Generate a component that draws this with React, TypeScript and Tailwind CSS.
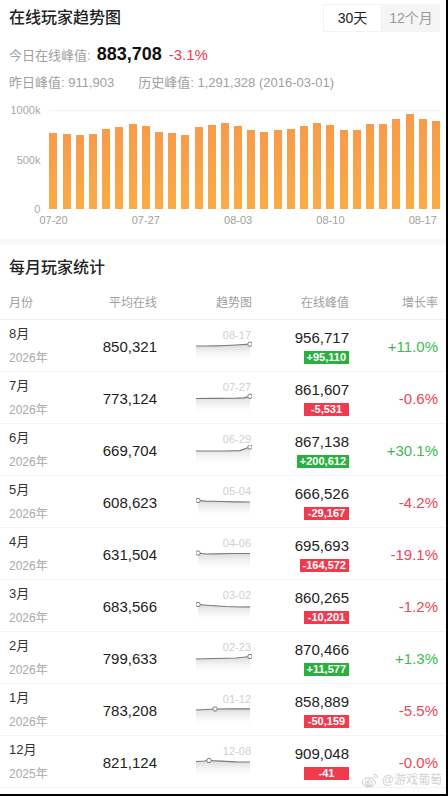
import React from "react";

const bars = [
  771, 754, 747, 761, 805, 825, 859, 835, 781, 765, 747, 831, 845, 869, 835,
  798, 775, 798, 805, 842, 869, 845, 801, 798, 859, 859, 909, 956, 909, 886,
];

const xLabels: Record<number, string> = {
  0: "07-20",
  7: "07-27",
  14: "08-03",
  21: "08-10",
  28: "08-17",
};

type Row = {
  month: string;
  year: string;
  avg: string;
  peak: string;
  diff: string;
  rate: string;
  up: boolean;
  date: string;
  pts: [number, number][];
  mark: number;
};

const rows: Row[] = [
  { month: "8月", year: "2026年", avg: "850,321", peak: "956,717", diff: "+95,110", rate: "+11.0%", up: true, date: "08-17", pts: [[0, 5], [10, 5], [20, 4.8], [30, 4.5], [40, 4], [54, 3.2]], mark: 5 },
  { month: "7月", year: "2026年", avg: "773,124", peak: "861,607", diff: "-5,531", rate: "-0.6%", up: false, date: "07-27", pts: [[0, 5.5], [20, 5.4], [40, 5.2], [48, 4.8], [54, 3.3]], mark: 4 },
  { month: "6月", year: "2026年", avg: "669,704", peak: "867,138", diff: "+200,612", rate: "+30.1%", up: true, date: "06-29", pts: [[0, 6], [15, 6], [30, 6], [44, 5.6], [54, 2]], mark: 4 },
  { month: "5月", year: "2026年", avg: "608,623", peak: "666,526", diff: "-29,167", rate: "-4.2%", up: false, date: "05-04", pts: [[2, 3.5], [10, 4.2], [25, 4.5], [40, 4.8], [54, 5]], mark: 0 },
  { month: "4月", year: "2026年", avg: "631,504", peak: "695,693", diff: "-164,572", rate: "-19.1%", up: false, date: "04-06", pts: [[2, 4], [10, 5], [20, 4.8], [35, 4.5], [54, 4.5]], mark: 0 },
  { month: "3月", year: "2026年", avg: "683,566", peak: "860,265", diff: "-10,201", rate: "-1.2%", up: false, date: "03-02", pts: [[2, 3.5], [15, 4.5], [30, 5.5], [45, 6], [54, 5.8]], mark: 0 },
  { month: "2月", year: "2026年", avg: "799,633", peak: "870,466", diff: "+11,577", rate: "+1.3%", up: true, date: "02-23", pts: [[0, 6], [20, 5.5], [40, 5], [54, 3.5]], mark: 3 },
  { month: "1月", year: "2026年", avg: "783,208", peak: "858,889", diff: "-50,159", rate: "-5.5%", up: false, date: "01-12", pts: [[0, 5], [10, 4.5], [19, 4], [35, 3.8], [54, 3.8]], mark: 2 },
  { month: "12月", year: "2025年", avg: "821,124", peak: "909,048", diff: "-41", rate: "-0.0%", up: false, date: "12-08", pts: [[0, 4.5], [8, 4], [13, 3.5], [25, 4.2], [40, 4.8], [54, 5]], mark: 2 },
];

function Spark({ row, id }: { row: Row; id: number }) {
  const line = row.pts.map((p, i) => `${i ? "L" : "M"}${p[0]} ${p[1]}`).join(" ");
  const first = row.pts[0];
  const last = row.pts[row.pts.length - 1];
  const area = `${line} L${last[0]} 22 L${first[0]} 22 Z`;
  const m = row.pts[row.mark];
  return (
    <svg width="56" height="22" viewBox="0 0 56 22">
      <defs>
        <linearGradient id={`g${id}`} x1="0" y1="0" x2="0" y2="1">
          <stop offset="0" stopColor="#d4d4d4" stopOpacity="0.9" />
          <stop offset="1" stopColor="#ffffff" stopOpacity="0" />
        </linearGradient>
      </defs>
      <path d={area} fill={`url(#g${id})`} />
      <path d={line} fill="none" stroke="#7a7a7a" strokeWidth="1.2" />
      <circle cx={m[0]} cy={m[1]} r="2.2" fill="#fff" stroke="#7a7a7a" strokeWidth="1" />
    </svg>
  );
}

export default function App() {
  return (
    <div className="relative h-[796px] w-[448px] overflow-hidden border-r-2 border-b-2 border-black bg-white font-['Liberation_Sans','Noto_Sans_CJK_SC',sans-serif] text-[#222]">
      {/* 30 day trend */}
      <div className="pl-[9px] pr-[6px]">
        <div className="mt-[4px] flex h-[28px] items-center justify-between">
          <div className="text-[16px] font-medium leading-[22px]">在线玩家趋势图</div>
          <div className="flex h-[28px] text-[14px]">
            <div className="flex w-[59px] items-center justify-center border border-[#f2f2f2] bg-white text-[#222]">30天</div>
            <div className="flex w-[58px] items-center justify-center bg-[#f5f5f5] text-[#999]">12个月</div>
          </div>
        </div>
        <div className="mt-[11px] flex items-baseline leading-[22px]">
          <span className="text-[13px] text-[#a0a0a0]">今日在线峰值:</span>
          <span className="ml-[6px] text-[18px] font-bold text-[#111]">883,708</span>
          <span className="ml-[7px] text-[15px] font-medium text-[#ee3b4f]">-3.1%</span>
        </div>
        <div className="mt-[7px] flex text-[13px] leading-[18px] text-[#a0a0a0]">
          <span>昨日峰值: 911,903</span>
          <span className="ml-[24px]">历史峰值: 1,291,328 (2016-03-01)</span>
        </div>

        <div className="mt-[12px] flex">
          <div className="flex h-[111px] w-[32px] flex-col items-end justify-between text-[11px] leading-[12px] text-[#a8a8a8]">
            <span>1000k</span>
            <span>500k</span>
            <span>0</span>
          </div>
          <div className="ml-[9px] w-[397px]">
            <div className="mt-[6px] flex h-[99px] items-end justify-between border-t border-[#f1f1f1] px-[0px]">
              {bars.map((v, i) => (
                <div
                  key={i}
                  className="w-[8px] bg-gradient-to-b from-[#f79b4b] to-[#fbab44]"
                  style={{ height: `${(v / 1000) * 99}px` }}
                />
              ))}
            </div>
            <div className="mt-[5px] flex h-[12px] justify-between text-[11px] leading-[12px] text-[#a0a0a0]">
              {bars.map((_, i) => (
                <div key={i} className="flex w-[8px] justify-center">
                  {xLabels[i] && <span className="whitespace-nowrap">{xLabels[i]}</span>}
                </div>
              ))}
            </div>
          </div>
        </div>
      </div>

      <div className="mt-[13px] h-[6px] bg-[#f8f8f8]" />

      {/* monthly stats */}
      <div className="mt-[12px] pl-[9px] text-[16px] font-medium leading-[22px]">每月玩家统计</div>
      <div className="grid grid-cols-[99px_58px_39px_56px_97px_1fr] border-b border-[#f0f0f0] pt-[16px] pr-[8px] pb-[8px] text-[12px] leading-[16px] text-[#a0a0a0]">
        <span className="pl-[9px]">月份</span>
        <span className="text-right whitespace-nowrap">平均在线</span>
        <span />
        <span className="pl-[20px] whitespace-nowrap">趋势图</span>
        <span className="text-right">在线峰值</span>
        <span className="text-right">增长率</span>
      </div>

      {rows.map((r, i) => (
        <div
          key={i}
          className="grid h-[52px] grid-cols-[99px_58px_39px_56px_97px_1fr] border-b border-[#f3f3f3] pr-[8px]"
        >
          <div className="pl-[9px] pt-[6px]">
            <div className="text-[13px] leading-[16px] text-[#333]">{r.month}</div>
            <div className="mt-[8px] text-[12px] leading-[16px] text-[#aaa]">{r.year}</div>
          </div>
          <div className="pt-[18px] text-right text-[15px] leading-[18px]">{r.avg}</div>
          <div />
          <div className="pt-[9px]">
            <div className="pr-[1px] text-right text-[11px] leading-[12px] text-[#cfcfcf]">{r.date}</div>
            <Spark row={r} id={i} />
          </div>
          <div className="flex flex-col items-end pt-[9px]">
            <div className="text-[15px] leading-[18px]">{r.peak}</div>
            <div
              className={`mt-[4px] h-[13px] min-w-[45px] px-[3px] text-center text-[11px] font-bold leading-[13px] text-white ${
                r.up ? "bg-[#2bb040]" : "bg-[#f03b4f]"
              }`}
            >
              {r.diff}
            </div>
          </div>
          <div className={`pt-[18px] text-right text-[15px] leading-[18px] ${r.up ? "text-[#3dba4e]" : "text-[#ee4559]"}`}>
            {r.rate}
          </div>
        </div>
      ))}

      {/* watermark */}
      <div className="absolute right-[4px] bottom-[5px] flex items-center gap-[3px] text-[12px] text-[#d2d2d2]">
        <svg width="18" height="15" viewBox="0 0 18 15" fill="none" stroke="#c8c8c8" strokeWidth="1">
          <path d="M7.5 4.5C4 5 1 7.5 1.2 10c.3 2.6 3.6 4 7.2 3.7 3.6-.3 6.3-2.2 6-4.6-.2-1.5-1.6-1.9-2.4-1.9.6-1.4 0-2.4-1.7-2-1 .2-1.8.7-2.2 1 .4-1.1.4-2-.6-1.7z" />
          <ellipse cx="7.6" cy="10.2" rx="3.6" ry="2.4" />
          <circle cx="7" cy="10.4" r="1" />
          <path d="M12.5 1.2c2.2-.2 4 1.5 3.8 3.7M12.6 3c1.1 0 1.9.8 1.8 1.9" />
        </svg>
        <span className="[text-shadow:0_0_1px_#fff]">@游戏葡萄</span>
      </div>
    </div>
  );
}
